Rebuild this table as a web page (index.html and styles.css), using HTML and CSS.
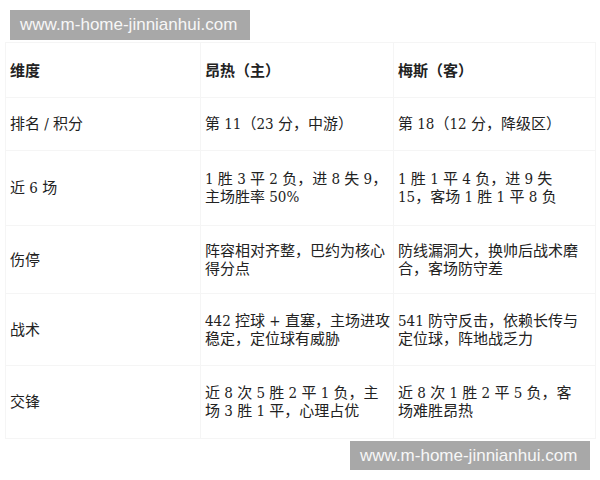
FILE: index.html
```html
<!DOCTYPE html>
<html lang="zh-CN">
<head>
<meta charset="utf-8">
<link rel="stylesheet" href="styles.css">
</head>
<body>
<div class="wm wm-top">www.m-home-jinnianhui.com</div>
<div class="table">
  <div class="cell head">维度</div>
  <div class="cell head">昂热（主）</div>
  <div class="cell head">梅斯（客）</div>

  <div class="cell r2">排名 / 积分</div>
  <div class="cell r2">第 11（23 分，中游）</div>
  <div class="cell r2">第 18（12 分，降级区）</div>

  <div class="cell r3">近 6 场</div>
  <div class="cell r3">1 胜 3 平 2 负，进 8 失 9，<br>主场胜率 50%</div>
  <div class="cell r3">1 胜 1 平 4 负，进 9 失<br>15，客场 1 胜 1 平 8 负</div>

  <div class="cell r4">伤停</div>
  <div class="cell r4">阵容相对齐整，巴约为核心<br>得分点</div>
  <div class="cell r4">防线漏洞大，换帅后战术磨<br>合，客场防守差</div>

  <div class="cell r5">战术</div>
  <div class="cell r5">442 控球 + 直塞，主场进攻<br>稳定，定位球有威胁</div>
  <div class="cell r5">541 防守反击，依赖长传与<br>定位球，阵地战乏力</div>

  <div class="cell r6">交锋</div>
  <div class="cell r6">近 8 次 5 胜 2 平 1 负，主<br>场 3 胜 1 平，心理占优</div>
  <div class="cell r6">近 8 次 1 胜 2 平 5 负，客<br>场难胜昂热</div>
</div>
<div class="wm wm-bottom">www.m-home-jinnianhui.com</div>
</body>
</html>
```
FILE: styles.css
```css
html, body {
  margin: 0;
  padding: 0;
  background: #ffffff;
}
body {
  width: 600px;
  height: 480px;
  overflow: hidden;
  font-family: "DejaVu Serif Condensed", "Liberation Serif", "Noto Sans CJK SC", serif;
  color: #222222;
}
.wm {
  width: 240px;
  height: 30px;
  box-sizing: border-box;
  background: #a8a8a8;
  color: #f7f7f7;
  font-family: "Liberation Sans", "DejaVu Sans", sans-serif;
  font-size: 17px;
  line-height: 30px;
  padding-left: 10px;
}
.wm-top {
  margin: 10px 0 0 10px;
}
.wm-bottom {
  margin: 2px 0 0 350px;
  height: 29px;
  line-height: 29px;
}
.table {
  margin: 2px 0 0 5px;
  display: grid;
  grid-template-columns: 195px 193px 202px;
  width: 590px;
  border-top: 1px solid #f5f5f5;
  border-left: 1px solid #f5f5f5;
}
.cell {
  box-sizing: border-box;
  display: flex;
  flex-direction: column;
  justify-content: center;
  padding: 0 4px;
  font-size: 15px;
  line-height: 18px;
  white-space: nowrap;
  border-right: 1px solid #f5f5f5;
  border-bottom: 1px solid #f5f5f5;
}
.head {
  height: 55px;
  font-weight: bold;
  font-family: "Noto Sans CJK SC", sans-serif;
}
.r2 { height: 53px; }
.r3 { height: 75px; }
.r4 { height: 68px; }
.r5 { height: 72px; }
.r6 { height: 73px; }
```
